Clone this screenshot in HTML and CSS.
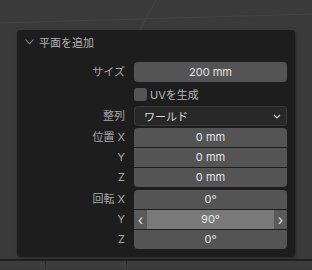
FILE: index.html
```html
<!DOCTYPE html>
<html lang="ja">
<head>
<meta charset="UTF-8">
<meta name="viewport" content="width=device-width, initial-scale=1.0">
<title>平面を追加</title>
<link rel="stylesheet" href="styles.css">
</head>
<body>

<div class="viewport">
    <svg class="grid" width="312" height="262" viewBox="0 0 312 262">
        <line x1="0" y1="23" x2="312" y2="14" stroke="#444" stroke-width="1"/>
        <line x1="156" y1="0" x2="140" y2="30" stroke="#444" stroke-width="1"/>
    </svg>

    <div class="panel">
        <div class="panel-header">
            <svg class="chevron" width="9" height="6" viewBox="0 0 9 6">
                <path d="M0.5 0.5 L4.5 4.8 L8.5 0.5" fill="none" stroke="#8c8c8c" stroke-width="1.1"/>
            </svg>
            <span>平面を追加</span>
        </div>

        <div class="props">
            <label class="prop-label">サイズ</label>
            <div class="field">200 mm</div>

            <div></div>
            <div class="check-row">
                <span class="checkbox"></span>
                <span>UVを生成</span>
            </div>

            <label class="prop-label">整列</label>
            <div class="dropdown">
                <span>ワールド</span>
                <svg width="8" height="5" viewBox="0 0 8 5">
                    <path d="M1 1 L4 4 L7 1" fill="none" stroke="#cfcfcf" stroke-width="1.1"/>
                </svg>
            </div>

            <div class="group-labels">
                <label class="prop-label">位置 X</label>
                <label class="prop-label">Y</label>
                <label class="prop-label">Z</label>
            </div>
            <div class="group">
                <div class="field">0 mm</div>
                <div class="field">0 mm</div>
                <div class="field">0 mm</div>
            </div>

            <div class="group-labels rot">
                <label class="prop-label">回転 X</label>
                <label class="prop-label">Y</label>
                <label class="prop-label">Z</label>
            </div>
            <div class="group rot">
                <div class="field">0°</div>
                <div class="field hover">
                    <span class="arrow">‹</span>
                    <span class="value">90°</span>
                    <span class="arrow">›</span>
                </div>
                <div class="field">0°</div>
            </div>
        </div>
    </div>
</div>

<div class="timeline">
    <span class="tab small"></span>
    <span class="tab wide"></span>
</div>

</body>
</html>
```

FILE: styles.css
```css
body {
    margin: 0;
    width: 312px;
    height: 270px;
    overflow: hidden;
    background-color: #3a3a3a;
    font-family: "Inter", "Noto Sans CJK JP", sans-serif;
    font-size: 11px;
}

.viewport {
    position: relative;
    height: 261px;
    padding: 30px 0 0 17px;
    box-sizing: border-box;
    border-bottom: 2px solid #1f1f1f;
}

.grid {
    position: absolute;
    top: 0;
    left: 0;
}

.panel {
    position: relative;
    width: 278px;
    height: 227px;
    background-color: #1d1d1d;
    border-radius: 4px;
    box-shadow: 1px 1px 3px rgba(0, 0, 0, 0.35);
    box-sizing: border-box;
    padding: 0 8px 0 8px;
}

.panel-header {
    display: flex;
    align-items: center;
    height: 24px;
    color: #b4b4b4;
    gap: 5px;
    padding-left: 0;
}

.chevron {
    margin-left: 0;
}

.props {
    display: grid;
    grid-template-columns: 100px 153px;
    column-gap: 9px;
    margin-top: 8px;
}

.prop-label {
    color: #a8a8a8;
    text-align: right;
    height: 20px;
    line-height: 20px;
}

.field {
    height: 20px;
    line-height: 20px;
    background-color: #545454;
    color: #e6e6e6;
    text-align: center;
    border-radius: 4px;
}

.check-row {
    display: flex;
    align-items: center;
    gap: 3px;
    height: 20px;
    margin: 2px 0;
    color: #b8b8b8;
}

.checkbox {
    width: 13px;
    height: 13px;
    background-color: #545454;
    border-radius: 3px;
}

.dropdown {
    display: flex;
    align-items: center;
    justify-content: space-between;
    height: 20px;
    box-sizing: border-box;
    padding: 0 5px 0 9px;
    background-color: #282828;
    border: 1px solid #3a3a3a;
    border-radius: 4px;
    color: #dcdcdc;
}

.group-labels {
    display: flex;
    flex-direction: column;
    gap: 0;
    margin-top: 2px;
}

.group-labels .prop-label {
    height: 19px;
    line-height: 19px;
    margin-bottom: 1px;
}

.group {
    display: flex;
    flex-direction: column;
    gap: 1px;
    margin-top: 2px;
    background-color: #1d1d1d;
}

.group .field {
    height: 19px;
    line-height: 19px;
    border-radius: 0;
}

.group .field:first-child {
    border-radius: 4px 4px 0 0;
}

.group .field:last-child {
    border-radius: 0 0 4px 4px;
}

.rot {
    margin-top: 2px;
}

.field.hover {
    display: flex;
    background-color: #5a5a5a;
}

.field.hover .arrow {
    width: 13px;
    color: #e0e0e0;
    font-size: 14px;
}

.field.hover .value {
    flex: 1;
    background-color: #797979;
}

.timeline {
    display: flex;
    height: 7px;
    background-color: #3d3d3d;
}

.tab {
    border-right: 1px solid #2c2c2c;
}

.tab.small {
    width: 45px;
}

.tab.wide {
    width: 80px;
}
```
